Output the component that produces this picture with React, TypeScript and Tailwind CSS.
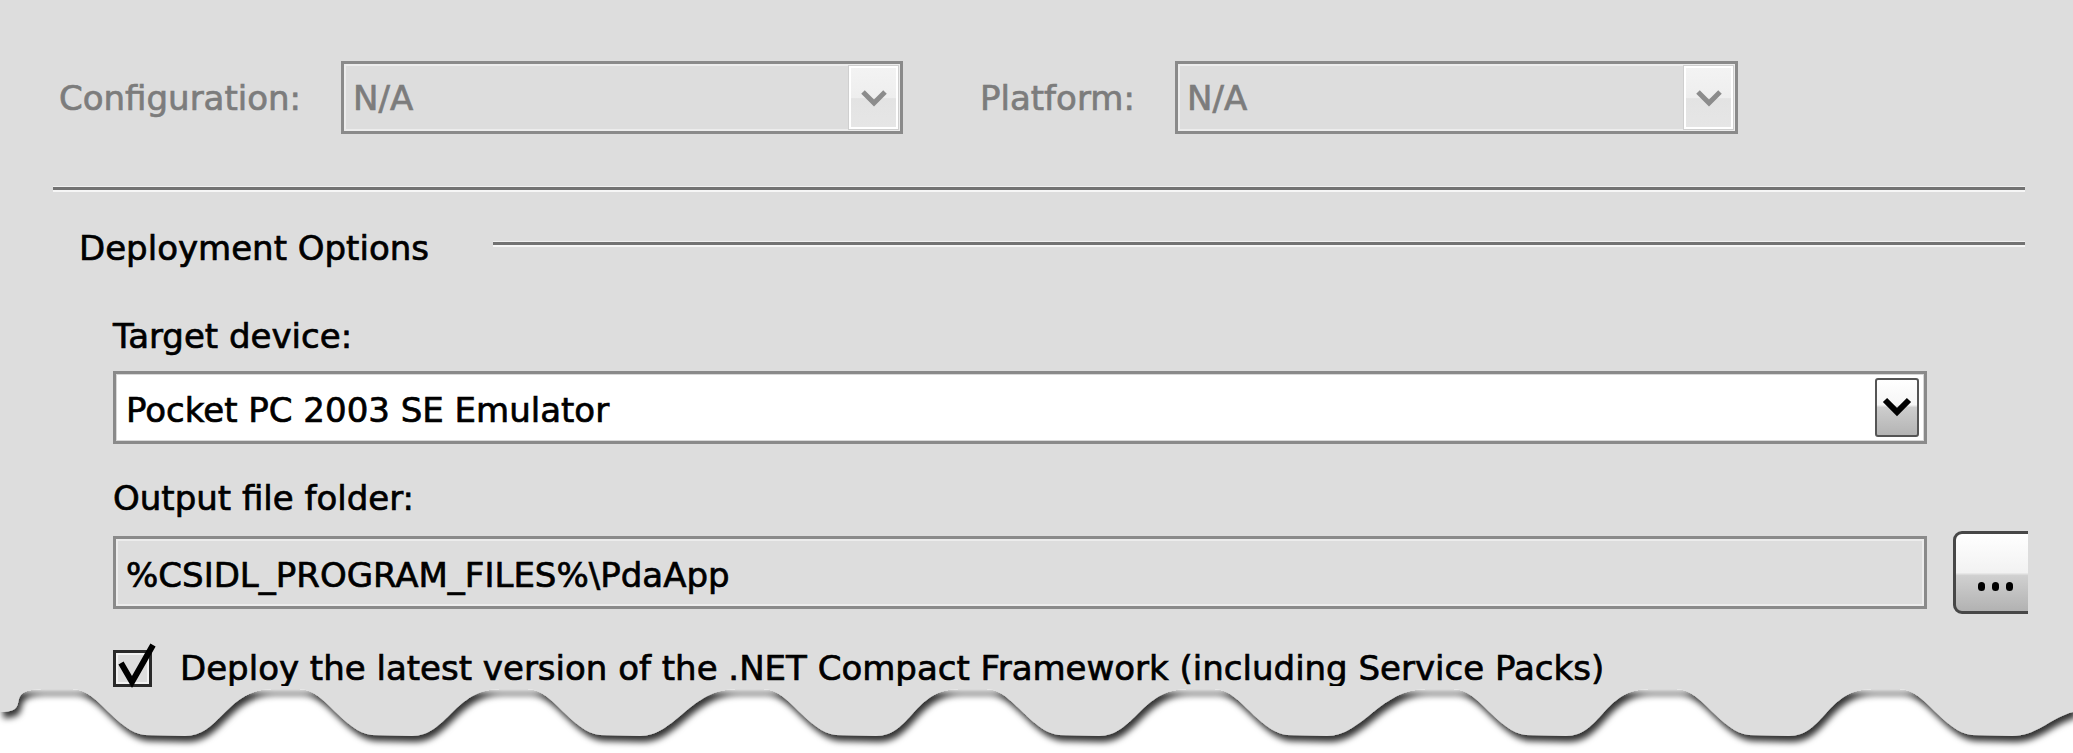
import React from "react"

const PEAKS = [45, 272, 500, 736, 959, 1187, 1426, 1649, 1872]

// builds the torn-paper bottom edge
function tornPath() {
  let d = "M0,0 L0,26"
  let px = 0
  let py = 26
  PEAKS.forEach((p) => {
    d += ` C${px + 35},${py} ${p - 45},3 ${p},3 L${p + 28},3`
    d += ` C${p + 52},3 ${p + 72},46 ${p + 100},49 L${p + 140},50`
    px = p + 140
    py = 50
  })
  d += ` C${px + 25},50 2050,32 2073,26 L2073,0 Z`
  return d
}

function Etched({ className }: { className: string }) {
  return <div className={`h-[3px] bg-[#727272] shadow-[0_-1px_0_#f0f0f0,0_2px_0_#f6f6f6] ${className}`} />
}

function Chevron({ color, stroke }: { color: string; stroke: number }) {
  return (
    <svg width="30" height="20" viewBox="0 0 30 20">
      <polyline points="4,4 15,15 26,4" fill="none" stroke={color} strokeWidth={stroke} />
    </svg>
  )
}

function DisabledCombo({ width }: { width: string }) {
  return (
    <div
      className={`${width} h-[73px] flex items-center justify-between border-[3px] border-[#8a8a8a] shadow-[inset_0_0_0_2px_#ececec] pl-[9px] pr-[2px] text-[#7c7c7c]`}
    >
      <span>N/A</span>
      <div className="w-[49px] h-[63px] flex items-center justify-center border-2 border-white outline outline-1 outline-[#cfcfcf] bg-[linear-gradient(to_bottom,#f3f3f3_0%,#eeeeee_50%,#e3e3e3_52%,#e6e6e6_100%)]">
        <Chevron color="#8c8c8c" stroke={5} />
      </div>
    </div>
  )
}

export default function App() {
  return (
    <div className="w-[2073px] h-[753px] overflow-hidden bg-white font-['DejaVu_Sans',sans-serif] text-[34px] leading-[40px] text-black [-webkit-text-stroke:0.7px]">
      <div className="h-[686px] bg-[#dddddd] pt-[61px]">
        <div className="flex items-center h-[73px] pl-[59px] text-[#7c7c7c]">
          <span className="w-[282px]">Configuration:</span>
          <DisabledCombo width="w-[562px]" />
          <span className="ml-[77px] w-[195px]">Platform:</span>
          <DisabledCombo width="w-[563px]" />
        </div>

        <Etched className="ml-[53px] mt-[53px] w-[1972px]" />

        <div className="flex items-start mt-[38px] pl-[79px]">
          <span className="w-[414px]">Deployment Options</span>
          <Etched className="mt-[14px] w-[1532px]" />
        </div>

        <div className="ml-[113px] mt-[48px]">
          <div>Target device:</div>
          <div className="mt-[15px] w-[1814px] h-[73px] flex items-center justify-between bg-white border-[3px] border-[#8a8a8a] shadow-[inset_0_0_0_1px_#d8d8d8] pl-[10px] pr-[5px]">
            <span className="pt-[4px]">Pocket PC 2003 SE Emulator</span>
            <div className="w-[44px] h-[59px] flex justify-center pt-[16px] rounded-[3px] border-2 border-[#555555] bg-[linear-gradient(to_bottom,#ffffff_0%,#f6f6f6_45%,#cdcdcd_50%,#b4b4b4_100%)]">
              <svg width="32" height="22" viewBox="0 0 32 22">
                <polyline points="4,4 16,16 28,4" fill="none" stroke="#000000" strokeWidth="6" />
              </svg>
            </div>
          </div>

          <div className="mt-[34px]">Output file folder:</div>
          <div className="mt-[13px] flex items-center">
            <div className="w-[1814px] h-[73px] flex items-center border-[3px] border-[#8a8a8a] shadow-[inset_0_0_0_2px_#ececec] pl-[10px]">
              <span className="pt-[4px]">%CSIDL_PROGRAM_FILES%\PdaApp</span>
            </div>
            <div className="ml-[26px] w-[75px] h-[83px] overflow-hidden">
              <div className="w-[100px] h-[83px] rounded-[9px] border-[3px] border-[#474747] bg-[linear-gradient(to_bottom,#ffffff_0%,#f2f2f2_50%,#d0d0d0_54%,#b2b2b2_100%)] flex items-end pb-[20px] pl-[22px] gap-[7px]">
                <span className="w-[7px] h-[9px] rounded-full bg-black" />
                <span className="w-[7px] h-[9px] rounded-full bg-black" />
                <span className="w-[7px] h-[9px] rounded-full bg-black" />
              </div>
            </div>
          </div>

          <div className="mt-[34px] flex items-start">
            <div className="relative mt-[2px] w-[39px] h-[37px] border-[3px] border-[#2a2a2a] shadow-[inset_0_0_0_2px_#f2f2f2]">
              <svg className="absolute left-[-3px] top-[-11px] overflow-visible" width="44" height="48" viewBox="0 0 44 48">
                <polyline points="8,21 19,40 40,3" fill="none" stroke="#000000" strokeWidth="6" strokeLinejoin="miter" />
              </svg>
            </div>
            <span className="ml-[28px]">
              Deploy the latest version of the .NET Compact Framework (including Service Packs)
            </span>
          </div>
        </div>
      </div>

      <svg className="block" width="2073" height="67" viewBox="0 0 2073 67">
        <defs>
          <filter id="torn" x="-2%" y="-40%" width="104%" height="220%">
            <feDropShadow dx="3" dy="6" stdDeviation="3" floodColor="#000000" floodOpacity="0.8" />
          </filter>
        </defs>
        <path d={tornPath()} fill="#dddddd" filter="url(#torn)" />
      </svg>
    </div>
  )
}
